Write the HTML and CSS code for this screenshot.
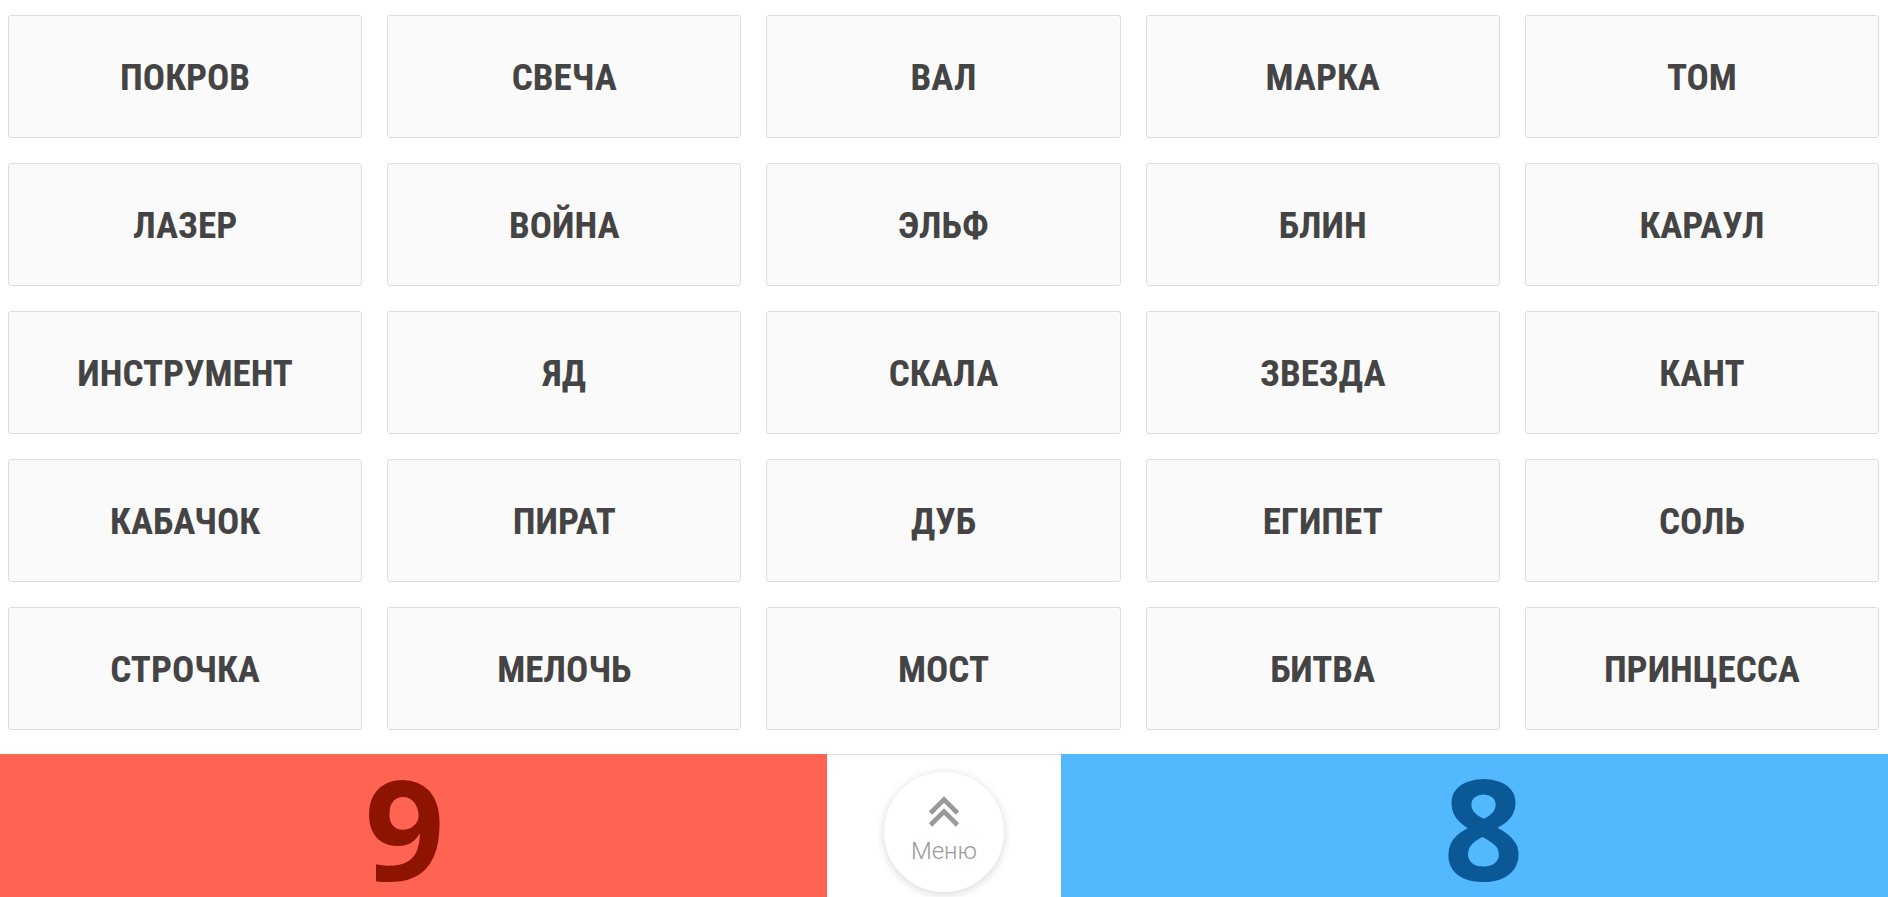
FILE: index.html
```html
<!DOCTYPE html>
<html lang="ru">
<head>
<meta charset="utf-8">
<title>Слова</title>
<link rel="stylesheet" href="styles.css">
</head>
<body>
<main class="board">
  <div class="card"><span class="word">ПОКРОВ</span></div>
  <div class="card"><span class="word">СВЕЧА</span></div>
  <div class="card"><span class="word">ВАЛ</span></div>
  <div class="card"><span class="word">МАРКА</span></div>
  <div class="card"><span class="word">ТОМ</span></div>
  <div class="card"><span class="word">ЛАЗЕР</span></div>
  <div class="card"><span class="word">ВОЙНА</span></div>
  <div class="card"><span class="word">ЭЛЬФ</span></div>
  <div class="card"><span class="word">БЛИН</span></div>
  <div class="card"><span class="word">КАРАУЛ</span></div>
  <div class="card"><span class="word">ИНСТРУМЕНТ</span></div>
  <div class="card"><span class="word">ЯД</span></div>
  <div class="card"><span class="word">СКАЛА</span></div>
  <div class="card"><span class="word">ЗВЕЗДА</span></div>
  <div class="card"><span class="word">КАНТ</span></div>
  <div class="card"><span class="word">КАБАЧОК</span></div>
  <div class="card"><span class="word">ПИРАТ</span></div>
  <div class="card"><span class="word">ДУБ</span></div>
  <div class="card"><span class="word">ЕГИПЕТ</span></div>
  <div class="card"><span class="word">СОЛЬ</span></div>
  <div class="card"><span class="word">СТРОЧКА</span></div>
  <div class="card"><span class="word">МЕЛОЧЬ</span></div>
  <div class="card"><span class="word">МОСТ</span></div>
  <div class="card"><span class="word">БИТВА</span></div>
  <div class="card"><span class="word">ПРИНЦЕССА</span></div>
</main>
<footer class="scorebar">
  <div class="score score-red"><span class="num">9</span></div>
  <div class="middle">
    <button class="menu-btn" type="button">
      <svg class="menu-icon" width="34" height="32" viewBox="0 0 34 32" aria-hidden="true">
        <path d="M3.5 18 L17 4.5 L30.5 18" fill="none" stroke="#999" stroke-width="4.6"/>
        <path d="M3.5 30 L17 16.5 L30.5 30" fill="none" stroke="#999" stroke-width="4.6"/>
      </svg>
      <span class="menu-label">Меню</span>
    </button>
  </div>
  <div class="score score-blue"><span class="num">8</span></div>
</footer>
</body>
</html>
```
FILE: styles.css
```css
html, body {
  margin: 0;
  padding: 0;
  background: #ffffff;
}
body {
  width: 1888px;
  height: 897px;
  overflow: hidden;
  font-family: "Roboto", "Liberation Sans", sans-serif;
}
.board {
  display: grid;
  grid-template-columns: repeat(5, 1fr);
  grid-auto-rows: 123px;
  gap: 25px;
  padding: 15px 9px 24px 8px;
}
.card {
  box-sizing: border-box;
  display: flex;
  align-items: center;
  justify-content: center;
  background: #fafafa;
  border: 1px solid #dddddd;
  border-radius: 3px;
}
.word {
  font-family: "Roboto Condensed", "Roboto", sans-serif;
  font-weight: 700;
  font-stretch: condensed;
  font-size: 37px;
  color: #444444;
  letter-spacing: 0;
  padding-top: 1px;
}
.scorebar {
  display: grid;
  grid-template-columns: 1fr 234px 1fr;
  height: 143px;
}
.score {
  display: flex;
  align-items: center;
  justify-content: center;
  font-family: "Open Sans", "Noto Sans", sans-serif;
  font-weight: 700;
  font-size: 140px;
  line-height: 1;
}
.num {
  display: block;
  padding-top: 2px;
}
.score-red {
  background: #ff6452;
  color: #8c1400;
  padding-right: 18px;
}
.score-blue {
  background: #52b9ff;
  color: #0a5896;
  padding-left: 18px;
}
.middle {
  box-sizing: border-box;
  border-top: 1px solid #e0e0e0;
  display: flex;
  justify-content: center;
  padding-top: 17px;
}
.menu-btn {
  box-sizing: border-box;
  width: 120px;
  height: 120px;
  border-radius: 50%;
  border: none;
  background: #ffffff;
  box-shadow: 0 2px 10px rgba(0, 0, 0, 0.16);
  display: flex;
  flex-direction: column;
  align-items: center;
  padding: 23px 0 0 0;
  margin: 0;
  cursor: pointer;
}
.menu-icon {
  display: block;
}
.menu-label {
  display: block;
  margin-top: 10px;
  font-family: "Roboto", sans-serif;
  font-weight: 300;
  font-size: 24px;
  line-height: 28px;
  color: #999999;
}
```
